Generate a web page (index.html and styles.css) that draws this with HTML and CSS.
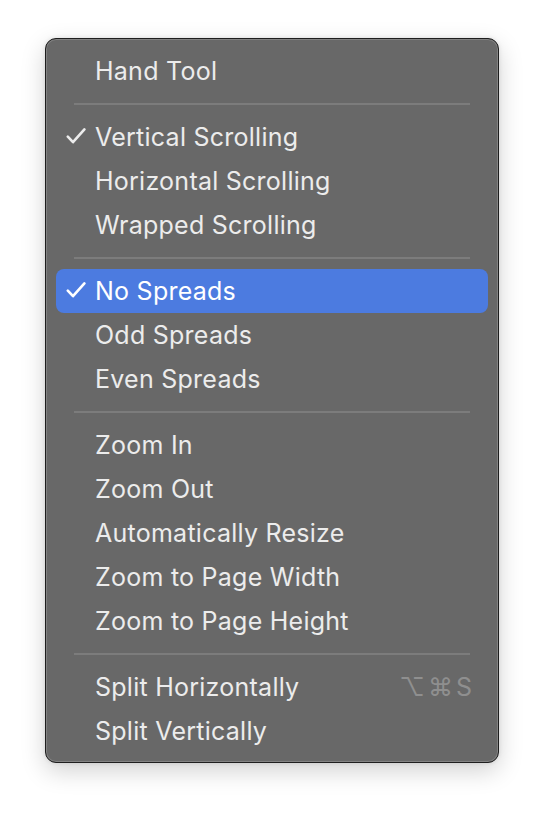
FILE: index.html
```html
<!DOCTYPE html>
<html>
<head>
<meta charset="utf-8">
<link rel="stylesheet" href="styles.css">
</head>
<body>
<div class="menu">
  <div class="item">Hand Tool</div>
  <div class="sep"></div>
  <div class="item"><svg class="check" viewBox="0 0 20 16" width="20" height="16"><path d="M1.8 8.6 L7 14.2 L18.4 1.4" fill="none" stroke="currentColor" stroke-width="2.6" stroke-linecap="round" stroke-linejoin="round"/></svg>Vertical Scrolling</div>
  <div class="item">Horizontal Scrolling</div>
  <div class="item">Wrapped Scrolling</div>
  <div class="sep"></div>
  <div class="item active"><svg class="check" viewBox="0 0 20 16" width="20" height="16"><path d="M1.8 8.6 L7 14.2 L18.4 1.4" fill="none" stroke="currentColor" stroke-width="2.6" stroke-linecap="round" stroke-linejoin="round"/></svg>No Spreads</div>
  <div class="item">Odd Spreads</div>
  <div class="item">Even Spreads</div>
  <div class="sep"></div>
  <div class="item">Zoom In</div>
  <div class="item">Zoom Out</div>
  <div class="item">Automatically Resize</div>
  <div class="item">Zoom to Page Width</div>
  <div class="item">Zoom to Page Height</div>
  <div class="sep"></div>
  <div class="item"><span class="label">Split Horizontally</span><span class="shortcut">⌥⌘S</span></div>
  <div class="item">Split Vertically</div>
</div>
</body>
</html>
```
FILE: styles.css
```css
html, body {
  margin: 0;
  padding: 0;
  background: #ffffff;
}
body {
  width: 544px;
  height: 816px;
  font-family: Inter, "Noto Sans", "Liberation Sans", sans-serif;
}
.menu {
  box-sizing: border-box;
  margin: 38px 0 0 45px;
  width: 454px;
  height: 725px;
  background: #686868;
  border: 1px solid #1e1e1e;
  border-radius: 11px;
  box-shadow: inset 0 0 0 1px #828282, 0 8px 24px rgba(0,0,0,0.18), 0 0 4px rgba(0,0,0,0.1);
  padding: 10px 10px;
}
.item {
  position: relative;
  height: 44px;
  display: flex;
  align-items: center;
  padding-left: 39px;
  padding-right: 13px;
  color: #ececec;
  font-size: 25px;
  letter-spacing: 0.25px;
  border-radius: 8px;
}
.item.active {
  background: #4c7be0;
  color: #ffffff;
}
.check {
  position: absolute;
  left: 10px;
  top: 13px;
}
.label { flex: 1; }
.shortcut {
  color: #8f8f8f;
  letter-spacing: 3px;
}
.sep {
  height: 2px;
  margin: 10px 18px;
  background: #7c7c7c;
}
```
